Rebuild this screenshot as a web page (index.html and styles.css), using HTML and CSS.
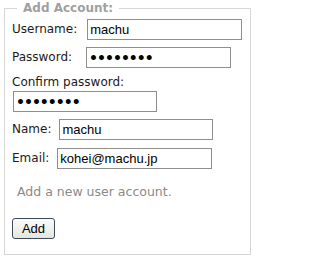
FILE: index.html
```html
<!DOCTYPE html>
<html>
<head>
<meta charset="utf-8">
<link rel="stylesheet" href="styles.css">
</head>
<body>
<form class="account-form">
  <fieldset class="box">
    <legend class="box-title">Add Account:</legend>
    <div class="row">
      <label class="label" for="username">Username:</label>
      <input class="field field-user" id="username" type="text" value="machu">
    </div>
    <div class="row">
      <label class="label" for="password">Password:</label>
      <input class="field secret field-pass" id="password" type="password" value="machupas">
    </div>
    <div class="row row-stack">
      <label class="label" for="confirm">Confirm password:</label>
      <input class="field secret field-confirm" id="confirm" type="password" value="machupas">
    </div>
    <div class="row row-name">
      <label class="label" for="name">Name:</label>
      <input class="field field-name" id="name" type="text" value="machu">
    </div>
    <div class="row">
      <label class="label" for="email">Email:</label>
      <input class="field field-email" id="email" type="text" value="kohei@machu.jp">
    </div>
    <p class="help">Add a new user account.</p>
    <div class="actions">
      <button class="btn" type="button">Add</button>
    </div>
  </fieldset>
</form>
</body>
</html>
```

FILE: styles.css
```css
html, body {
  margin: 0;
  padding: 0;
  background: #ffffff;
}

body {
  width: 255px;
}

.account-form {
  margin: 0;
  padding: 1px 4px 0 4px;
}

.box {
  margin: 0;
  border: 1px solid #d6d6d6;
  padding: 4px 7px 15px 7px;
  font-family: "DejaVu Sans", Verdana, sans-serif;
  font-size: 12px;
  color: #1a1a1a;
}

.box-title {
  padding: 0 6px;
  margin-left: 5px;
  font-weight: bold;
  color: #a0a0a0;
  font-size: 12px;
  line-height: 14px;
}

.row {
  display: flex;
  align-items: center;
  gap: 8px;
  margin-bottom: 7px;
}

.row-stack {
  flex-direction: column;
  align-items: flex-start;
  gap: 1px;
}

.row-name {
  margin-bottom: 8px;
}

.label {
  line-height: 15px;
}

.field {
  font-family: "Liberation Sans", Arial, sans-serif;
  font-size: 13px;
  line-height: 15px;
  height: 21px;
  box-sizing: border-box;
  padding: 2px 2px;
  border: 1px solid #8e8e8e;
  border-radius: 0;
  color: #000;
  background: #fff;
  margin: 0;
}

.secret {
  font-family: "DejaVu Sans", Verdana, sans-serif;
  font-weight: bold;
  font-size: 14px;
  letter-spacing: -1px;
}

.field-user { width: 155px; margin-left: 2px; }
.field-pass { width: 145px; margin-left: 6px; }
.field-confirm { width: 144px; margin-left: 1px; }
.field-name { width: 154px; }
.field-email { width: 155px; }

.help {
  margin: 15px 0 0 5px;
  color: #8a8a8a;
  font-size: 12.5px;
  line-height: 15px;
}

.actions {
  margin-top: 19px;
}

.btn {
  display: block;
  font-family: "Liberation Sans", Arial, sans-serif;
  font-size: 13px;
  width: 43px;
  height: 21px;
  padding: 0;
  border: 1px solid #3c4a5a;
  border-radius: 3px;
  background: linear-gradient(#fbfbf9, #e6e6e0);
  color: #000;
}
```
